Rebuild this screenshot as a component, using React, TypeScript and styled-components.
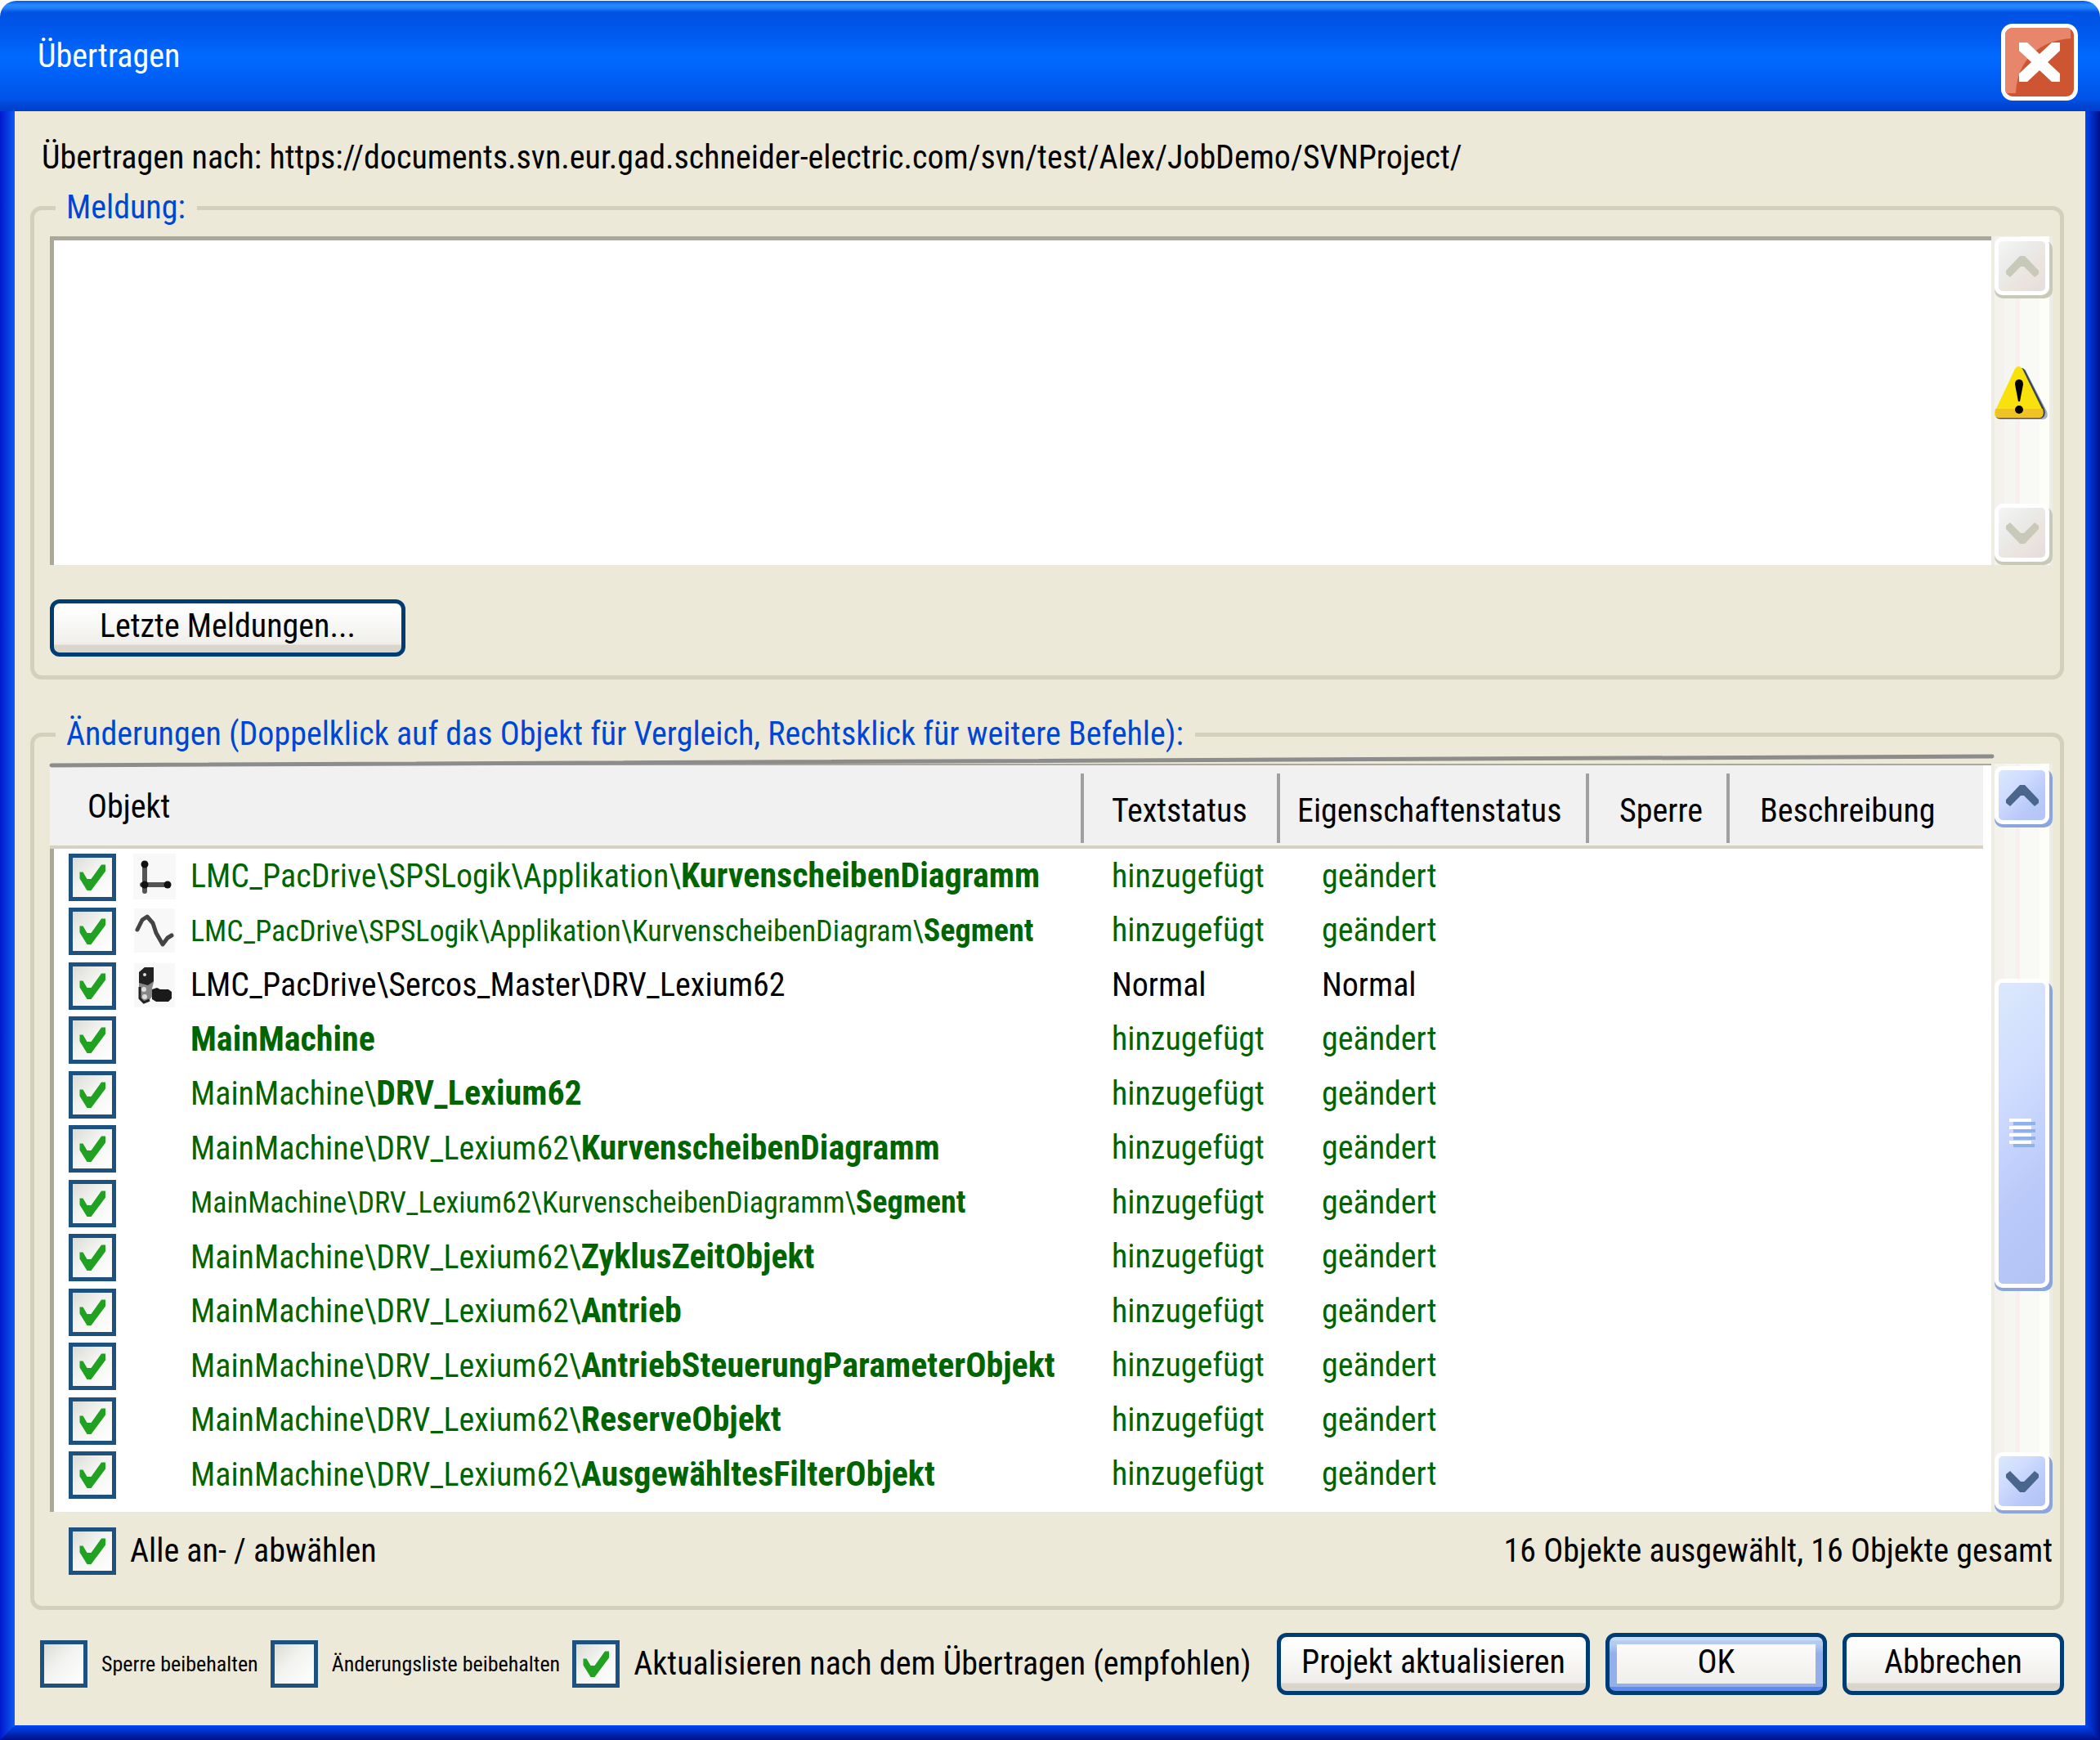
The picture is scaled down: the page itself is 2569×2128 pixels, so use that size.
import React, { useState } from "react";
import styled, { createGlobalStyle, css } from "styled-components";

const FONT = `"Roboto Condensed", "Arial Narrow", Roboto, "Liberation Sans", sans-serif`;
const BLUE = "#003c74";
const GREEN = "#006400";
const BEIGE = "#ece9d8";
const GROUP = "#d2d1bd";

const Global = createGlobalStyle`
  *, *::before, *::after { box-sizing: border-box; }
  body { margin: 0; background: #fff; }
  button, input, textarea { font: inherit; color: inherit; margin: 0; }
`;

const Dialog = styled.main`
  display: flex;
  flex-direction: column;
  min-height: 100vh;
  padding-top: 1px;
  font-family: ${FONT};
  font-size: 40px;
  line-height: 50px;
  color: #000;
  white-space: nowrap;
`;

const TitleBar = styled.header`
  display: flex;
  align-items: center;
  justify-content: space-between;
  height: 135px;
  padding: 0 27px 0 46px;
  border-radius: 20px 20px 0 0;
  background: linear-gradient(
    #0058e8 0, #2a8bff 5px, #2080fa 9px, #0052e2 14px, #0055e8 28px,
    #005cf2 46px, #006aff 68px, #0066fc 80px, #005cf2 100px, #0054e8 120px,
    #0048d8 126px, #003fcc 135px
  );
`;

const Title = styled.h1`
  margin: 0;
  font-size: 40px;
  font-weight: 400;
  color: #fff;
`;

const CloseButton = styled.button`
  display: block;
  width: 94px;
  height: 94px;
  padding: 0;
  margin-top: 14px;
  border: 5px solid #fff;
  border-radius: 14px;
  overflow: hidden;
  background: #cd5532;
  svg { display: block; width: 100%; height: 100%; }
`;

const Frame = styled.div`
  flex: 1;
  display: flex;
  flex-direction: column;
  background:
    linear-gradient(to right, #0018cf, #0f5cf0) left / 18px 100% no-repeat,
    linear-gradient(to right, #0046f5, #001089) right / 18px 100% no-repeat,
    ${BEIGE};
`;

const BottomEdge = styled.div`
  height: 18px;
  background: linear-gradient(#0046f5, #001089);
  clip-path: polygon(18px 0, calc(100% - 18px) 0, 100% 100%, 0 100%);
`;

const Content = styled.div`
  flex: 1;
  padding: 32px 44px 37px 37px;
`;

const Destination = styled.p`
  margin: 0 0 11px;
  padding-left: 14px;
`;

const Group = styled.fieldset<{ $bottom: number }>`
  min-width: 0;
  margin: 0;
  padding: 10px 9px ${(p) => p.$bottom}px 19px;
  border: 5px solid ${GROUP};
  border-radius: 14px;
  & + & { margin-top: 42px; padding-top: 0; }
`;

const Legend = styled.legend`
  margin-left: 7px;
  padding: 0 14px 0 13px;
  color: #0046d5;
`;

const Pane = styled.div`
  display: flex;
`;

const Message = styled.textarea`
  flex: 1;
  min-width: 0;
  height: 402px;
  border: solid #aca899;
  border-width: 5px 0 0 5px;
  border-radius: 0;
  padding: 8px;
  outline: 0;
  resize: none;
  overflow: hidden;
  background: #fff;
`;

const Track = styled.div<{ $list?: boolean }>`
  display: flex;
  flex-direction: column;
  justify-content: space-between;
  width: 75px;
  padding: ${(p) => (p.$list ? "3px 4px 2px" : "1px 4px 4px")};
  background: linear-gradient(
    to right,
    #eeede5 4px, #f5f2ee 4px 16px, #f5f6f1 16px 30px, #f9eef0 30px 35px,
    #f9faf6 35px 59px, #fefef9 59px 71px, #eeede5 71px
  );
`;

const raised = css<{ $active: boolean }>`
  width: 67px;
  padding: 0;
  border: 5px solid #fff;
  border-radius: 10px;
  background: ${(p) =>
    p.$active
      ? "linear-gradient(135deg, #dbe8fb, #cfdcff 35%, #b9c9f9 70%, #b3c3f5)"
      : "linear-gradient(135deg, #f5f5f5, #eaebe8 40%, #ebe4de 65%, #e5dddf)"};
  box-shadow: ${(p) => {
    const c = p.$active ? "#8aa6dd" : "#c9c9ba";
    return `4px 4px 0 ${c}, 0 4px 0 ${c}`;
  }};
`;

const ScrollButton = styled.button<{ $active: boolean }>`
  ${raised}
  display: grid;
  place-items: center;
  height: 71px;
  svg { width: 40px; height: 26px; }
`;

const Thumb = styled.div<{ $active: boolean }>`
  ${raised}
  display: grid;
  place-items: center;
  height: 378px;
  margin-bottom: 12px;
  svg { width: 32px; height: 36px; }
`;

const Warning = styled.svg`
  width: 66px;
  height: 68px;
  margin-bottom: 16px;
`;

const PushButton = styled.button<{ $width: number; $tall?: boolean; $primary?: boolean }>`
  width: ${(p) => p.$width}px;
  height: ${(p) => (p.$tall ? 76 : 70)}px;
  padding: 0 0 4px;
  border: 5px solid ${BLUE};
  border-radius: 12px;
  background: ${(p) =>
    p.$primary
      ? `linear-gradient(#fcfbfb, #f0efeb) center / calc(100% - 18px) calc(100% - 18px) no-repeat,
         linear-gradient(#c3dbff 4px, #b6ccef 5px 9px, #93b0ea 20px calc(100% - 5px), #6189f0 calc(100% - 5px))`
      : "linear-gradient(#fff, #f9f9f8 35%, #efeeea calc(100% - 10px), #d9d6cc calc(100% - 9px), #dcd4ca)"};
`;

const Recent = styled.div`
  margin-top: 42px;
`;

const TopRule = styled.svg`
  display: block;
  position: relative;
  z-index: 1;
  width: calc(100% - 72px);
  height: 11px;
  overflow: visible;
`;

const ListPane = styled.div`
  flex: 1;
  min-width: 0;
  height: 915px;
  border-top: 2px solid #aca899;
  background: linear-gradient(to right, #aca899 5px, #fff 5px);
`;

const Table = styled.table`
  width: calc(100% - 10px);
  table-layout: fixed;
  border-collapse: separate;
  border-spacing: 0;
`;

const Col = styled.col<{ $w?: number }>`
  width: ${(p) => (p.$w ? `${p.$w}px` : "auto")};
`;

const Head = styled.th<{ $pad: number; $plain?: boolean }>`
  height: 102px;
  padding: ${(p) => (p.$plain ? 4 : 14)}px 0 0 ${(p) => p.$pad}px;
  border-bottom: 4px solid #d9d1bf;
  font-weight: 400;
  text-align: left;
  background: ${(p) =>
    p.$plain
      ? "#f1f1f1"
      : "linear-gradient(#a0a0a0, #a0a0a0) left 10px / 4px 85px no-repeat, #f1f1f1"};
`;

const Row = styled.tr<{ $added: boolean; $compact?: boolean }>`
  height: 66px;
  color: ${(p) => (p.$added ? GREEN : "#000")};
  &:nth-child(odd) { height: 67px; }
  td:nth-child(3) { font-size: ${(p) => (p.$compact ? 36 : 40)}px; }
  b { font-size: ${(p) => (p.$compact ? 38 : 42)}px; }
`;

const Cell = styled.td<{ $pad?: number }>`
  padding: 0 0 0 ${(p) => p.$pad || 0}px;
  vertical-align: middle;
`;

const BoxCell = styled(Cell)`
  padding-top: 2px;
`;

const IconBox = styled.svg`
  display: block;
  width: 52px;
  height: 56px;
`;

const CheckBoxWrap = styled.span`
  display: grid;
  flex: none;
  width: 58px;
  height: 58px;
  > * { grid-area: 1 / 1; }
  svg { width: 58px; height: 58px; pointer-events: none; }
  input:not(:checked) + svg { visibility: hidden; }
`;

const CheckInput = styled.input`
  appearance: none;
  width: 58px;
  height: 58px;
  border: 5px solid #1c5180;
  background: linear-gradient(135deg, #dcdcd6, #f3f3f1 45%, #fff);
`;

const CheckLabel = styled.label<{ $small?: boolean }>`
  display: flex;
  align-items: center;
  gap: 17px;
  font-size: ${(p) => (p.$small ? 26 : 40)}px;
`;

const Summary = styled.div`
  display: flex;
  align-items: center;
  justify-content: space-between;
  margin-top: 19px;
  padding-left: 23px;
`;

const Footer = styled.footer`
  display: flex;
  align-items: center;
  gap: 15px;
  margin-top: 28px;
  padding-left: 12px;
`;

const Actions = styled.div`
  display: flex;
  gap: 19px;
  margin-left: auto;
`;

function CheckBox(props: React.InputHTMLAttributes<HTMLInputElement>) {
  return (
    <CheckBoxWrap>
      <CheckInput type="checkbox" {...props} />
      <svg viewBox="0 0 58 58" aria-hidden="true">
        <path
          d="M13.5 22.5h4L22.5 31h5L40 13.5h5v8L27.5 45h-5L13.5 30.5z"
          fill="#21a121"
        />
      </svg>
    </CheckBoxWrap>
  );
}

function Chevron({ down, color }: { down?: boolean; color: string }) {
  return (
    <svg viewBox="0 0 40 26" aria-hidden="true">
      <path
        d={
          down
            ? "M5 0 18 13h4L35 0l5 4v4L23 26h-6L0 8V4z"
            : "M5 26 18 13h4l13 13 5-4v-4L23 0h-6L0 18v4z"
        }
        fill={color}
      />
    </svg>
  );
}

function ScrollArrow({ active, down }: { active: boolean; down?: boolean }) {
  return (
    <ScrollButton
      type="button"
      $active={active}
      disabled={!active}
      aria-label={down ? "Nach unten" : "Nach oben"}
    >
      <Chevron down={down} color={active ? "#4a668c" : "#c9c9ba"} />
    </ScrollButton>
  );
}

function AxisIcon() {
  return (
    <IconBox viewBox="0 0 52 56" aria-hidden="true">
      <rect width="52" height="56" fill="#f8f8f9" />
      <g stroke="#555" strokeWidth="6" strokeLinecap="round">
        <path d="M14 12v34M11 38h32" />
      </g>
      <g fill="#111">
        <circle cx="14" cy="13" r="4.5" />
        <circle cx="14" cy="38" r="4.5" />
        <circle cx="42" cy="38" r="4.5" />
      </g>
    </IconBox>
  );
}

function CurveIcon() {
  return (
    <IconBox viewBox="0 0 52 56" aria-hidden="true">
      <rect width="50" height="54" x="1" y="1" fill="#f8f8f9" />
      <path
        d="M5 27 11 15 17 11 24 19 28 31 36 45 42 37 47 34"
        fill="none"
        stroke="#444"
        strokeWidth="5"
        strokeLinejoin="round"
        strokeLinecap="round"
      />
    </IconBox>
  );
}

function DriveIcon() {
  return (
    <IconBox viewBox="0 0 52 56" aria-hidden="true">
      <rect width="50" height="54" x="1" y="1" fill="#f8f8f9" />
      <path d="M7 12 14 6h11v18l-2 8v10l-6 7h-6l-4-6z" fill="#888" />
      <path d="M7 12 14 6h11v17l-7 5-11-3z" fill="#222" />
      <path d="M23 33l6-2 4 2h10l4 3v8l-4 4H28l-5-3z" fill="#1a1a1a" />
      <g fill="#ddd">
        <circle cx="14" cy="15" r="2" />
        <circle cx="13" cy="33" r="3" />
        <circle cx="14" cy="42" r="3" />
      </g>
      <path d="M8 30v14l5 5 7-3" stroke="#222" strokeWidth="3" fill="none" />
    </IconBox>
  );
}

type Entry = {
  path: string;
  name?: string;
  icon?: React.ReactNode;
  unchanged?: boolean;
  compact?: boolean;
};

const DRV = "MainMachine\\DRV_Lexium62\\";

const ENTRIES: Entry[] = [
  { path: "LMC_PacDrive\\SPSLogik\\Applikation\\", name: "KurvenscheibenDiagramm", icon: <AxisIcon /> },
  { path: "LMC_PacDrive\\SPSLogik\\Applikation\\KurvenscheibenDiagram\\", name: "Segment", icon: <CurveIcon />, compact: true },
  { path: "LMC_PacDrive\\Sercos_Master\\DRV_Lexium62", icon: <DriveIcon />, unchanged: true },
  { path: "", name: "MainMachine" },
  { path: "MainMachine\\", name: "DRV_Lexium62" },
  { path: DRV, name: "KurvenscheibenDiagramm" },
  { path: DRV + "KurvenscheibenDiagramm\\", name: "Segment", compact: true },
  { path: DRV, name: "ZyklusZeitObjekt" },
  { path: DRV, name: "Antrieb" },
  { path: DRV, name: "AntriebSteuerungParameterObjekt" },
  { path: DRV, name: "ReserveObjekt" },
  { path: DRV, name: "AusgewähltesFilterObjekt" },
];

export default function App() {
  const [checked, setChecked] = useState<boolean[]>(ENTRIES.map(() => true));
  const all = checked.every(Boolean);

  return (
    <>
      <Global />
      <Dialog>
        <TitleBar>
          <Title>Übertragen</Title>
          <CloseButton type="button" aria-label="Schließen">
            <svg viewBox="0 0 84 84" aria-hidden="true">
              <path d="M0 0h80v13C42 16 15 38 13 80H0z" fill="#e8866c" />
              <path
                d="M17 18h10l15 14 15-14h10v10L52 42l15 14v10H57L42 52 27 66H17V56l15-14-15-14z"
                fill="#fff"
              />
            </svg>
          </CloseButton>
        </TitleBar>
        <Frame>
          <Content>
            <Destination>
              Übertragen nach: https://documents.svn.eur.gad.schneider-electric.com/svn/test/Alex/JobDemo/SVNProject/
            </Destination>

            <Group $bottom={23}>
              <Legend>Meldung:</Legend>
              <Pane>
                <Message aria-label="Meldung" />
                <Track>
                  <ScrollArrow active={false} />
                  <Warning viewBox="0 0 66 68" role="img" aria-label="Warnung">
                    <path d="M34 4q3 0 5 4l25 48q3 10-6 10H8q-6 0-6-5z" fill="#a9b2c4" />
                    <path d="M33 3q3 0 5 4l23 46q3 10-5 12H6q-5 0-5-6z" fill="#3c4657" />
                    <path d="M25 4q4-6 9 0l25 51q2 8-4 9H5q-7-1-4-9z" fill="#f9e10b" />
                    <path d="M1 53h58q2 10-4 11H5q-6-1-4-11z" fill="#efc324" />
                    <path d="M25 23q0-6 5-6t5 6l-4 21h-2z" fill="#000" />
                    <circle cx="30" cy="54" r="5" fill="#000" />
                  </Warning>
                  <ScrollArrow active={false} down />
                </Track>
              </Pane>
              <Recent>
                <PushButton type="button" $width={435}>Letzte Meldungen...</PushButton>
              </Recent>
            </Group>

            <Group $bottom={38}>
              <Legend>
                Änderungen (Doppelklick auf das Objekt für Vergleich, Rechtsklick für weitere Befehle):
              </Legend>
              <TopRule viewBox="0 0 2379 11" preserveAspectRatio="none" aria-hidden="true">
                <path d="M2 13 2377 2" stroke="#8c8c8c" strokeWidth="5" strokeLinecap="round" />
              </TopRule>
              <Pane>
                <ListPane>
                  <Table>
                    <colgroup>
                      <Col $w={102} />
                      <Col $w={70} />
                      <Col />
                      <Col $w={240} />
                      <Col $w={378} />
                      <Col $w={172} />
                      <Col $w={314} />
                    </colgroup>
                    <thead>
                      <tr>
                        <Head colSpan={3} $pad={46} $plain>Objekt</Head>
                        <Head $pad={38}>Textstatus</Head>
                        <Head $pad={25}>Eigenschaftenstatus</Head>
                        <Head $pad={41}>Sperre</Head>
                        <Head $pad={41}>Beschreibung</Head>
                      </tr>
                    </thead>
                    <tbody>
                      {ENTRIES.map((e, i) => (
                        <Row key={i} $added={!e.unchanged} $compact={e.compact}>
                          <BoxCell $pad={23}>
                            <CheckBox
                              aria-label={e.path + (e.name || "")}
                              checked={checked[i]}
                              onChange={() => setChecked(checked.map((c, j) => (j === i ? !c : c)))}
                            />
                          </BoxCell>
                          <Cell>{e.icon}</Cell>
                          <Cell>
                            {e.path}
                            {e.name && <b>{e.name}</b>}
                          </Cell>
                          <Cell $pad={38}>{e.unchanged ? "Normal" : "hinzugefügt"}</Cell>
                          <Cell $pad={55}>{e.unchanged ? "Normal" : "geändert"}</Cell>
                          <Cell />
                          <Cell />
                        </Row>
                      ))}
                    </tbody>
                  </Table>
                </ListPane>
                <Track $list>
                  <ScrollArrow active />
                  <Thumb $active>
                    <svg viewBox="0 0 32 36" aria-hidden="true">
                      <path d="M5 6h27M5 15h27M5 24h27M5 33h26" stroke="#8fb0ec" strokeWidth="4" />
                      <path d="M0 2h27M0 11h27M0 20h27M0 29h27" stroke="#fff" strokeWidth="4" />
                    </svg>
                  </Thumb>
                  <ScrollArrow active down />
                </Track>
              </Pane>
              <Summary>
                <CheckLabel>
                  <CheckBox checked={all} onChange={() => setChecked(ENTRIES.map(() => !all))} />
                  Alle an- / abwählen
                </CheckLabel>
                <span>16 Objekte ausgewählt, 16 Objekte gesamt</span>
              </Summary>
            </Group>

            <Footer>
              <CheckLabel $small>
                <CheckBox />
                Sperre beibehalten
              </CheckLabel>
              <CheckLabel $small>
                <CheckBox />
                Änderungsliste beibehalten
              </CheckLabel>
              <CheckLabel>
                <CheckBox defaultChecked />
                Aktualisieren nach dem Übertragen (empfohlen)
              </CheckLabel>
              <Actions>
                <PushButton type="button" $width={383} $tall>Projekt aktualisieren</PushButton>
                <PushButton type="button" $width={271} $tall $primary>OK</PushButton>
                <PushButton type="button" $width={271} $tall>Abbrechen</PushButton>
              </Actions>
            </Footer>
          </Content>
          <BottomEdge />
        </Frame>
      </Dialog>
    </>
  );
}
